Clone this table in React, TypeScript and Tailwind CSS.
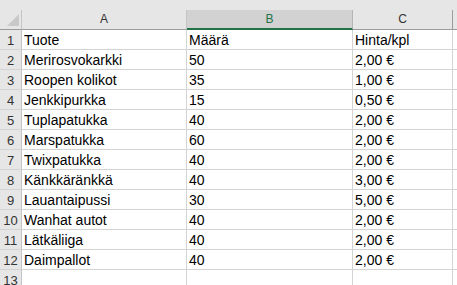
import React from 'react';

type Row = [string, string, string];

const rows: Row[] = [
  ['Tuote', 'Määrä', 'Hinta/kpl'],
  ['Merirosvokarkki', '50', '2,00 €'],
  ['Roopen kolikot', '35', '1,00 €'],
  ['Jenkkipurkka', '15', '0,50 €'],
  ['Tuplapatukka', '40', '2,00 €'],
  ['Marspatukka', '60', '2,00 €'],
  ['Twixpatukka', '40', '2,00 €'],
  ['Känkkäränkkä', '40', '3,00 €'],
  ['Lauantaipussi', '30', '5,00 €'],
  ['Wanhat autot', '40', '2,00 €'],
  ['Lätkäliiga', '40', '2,00 €'],
  ['Daimpallot', '40', '2,00 €'],
  ['', '', ''],
];

const cols = 'grid grid-cols-[22px_165px_166px_100px_1fr]';

const SelectAll: React.FC = () => (
  <svg width="22" height="19" viewBox="0 0 22 19" className="block">
    <polygon points="19,4 19,16 7,16" fill="#c8c8c8" />
  </svg>
);

const Cell: React.FC<{ text: string }> = ({ text }) => (
  <div className="flex h-[20px] items-end border-r border-b border-[#d4d4d4] bg-white pb-[1px] pl-[2px] text-[14px] leading-[16px] text-black whitespace-nowrap overflow-hidden">
    {text}
  </div>
);

const App: React.FC = () => {
  return (
    <div className="h-[285px] w-[457px] overflow-hidden bg-white text-[13px] font-['Liberation_Sans',Arial,sans-serif]">
      <div className="h-[10px] bg-[#e6e6e6]" />

      {/* column headers */}
      <div className={`${cols} h-[20px] bg-[#e6e6e6] text-[12px] leading-[13px]`}>
        <div className="border-r border-b border-r-[#c4c4c4] border-b-[#9b9b9b]">
          <SelectAll />
        </div>
        <div className="flex items-end justify-center border-r border-b border-r-[#c4c4c4] border-b-[#9b9b9b] pb-[3px] text-[#333]">
          A
        </div>
        <div className="flex items-end justify-center border-r border-b-2 border-r-[#b4b4b4] border-b-[#217346] bg-[#d2d2d2] pb-[2px] text-[#217346]">
          B
        </div>
        <div className="flex items-end justify-center border-r border-b border-r-[#9b9b9b] border-b-[#9b9b9b] pb-[3px] text-[#333]">
          C
        </div>
        <div className="border-b border-b-[#9b9b9b]" />
      </div>

      {rows.map((r, i) => (
        <div key={i} className={cols}>
          <div className="flex h-[20px] items-end justify-center border-r border-b border-r-[#c4c4c4] border-b-[#d4d4d4] bg-[#e6e6e6] pb-[1px] leading-[15px] text-[#333]">
            {i + 1}
          </div>
          <Cell text={r[0]} />
          <Cell text={r[1]} />
          <Cell text={r[2]} />
          <div className="h-[20px] border-b border-[#d4d4d4]" />
        </div>
      ))}
    </div>
  );
};

export default App;
